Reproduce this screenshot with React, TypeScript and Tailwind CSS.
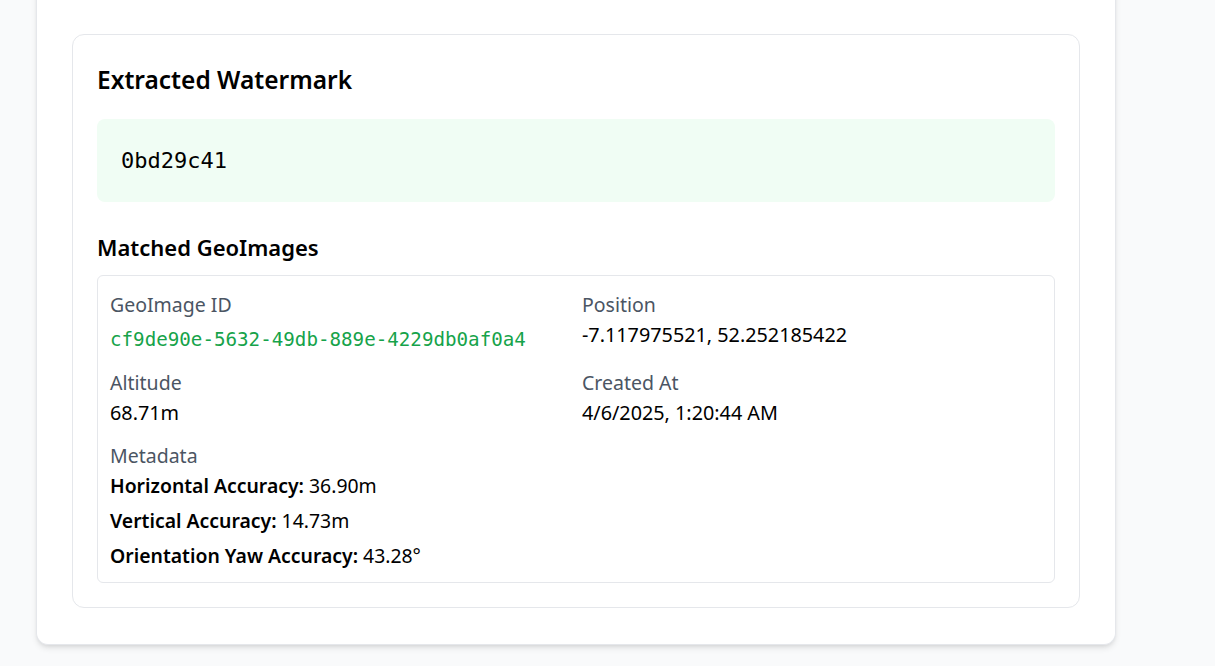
import React from 'react';

const sans = "font-['Segoe_UI','Noto_Sans',sans-serif]";
const mono = "font-['DejaVu_Sans_Mono','Liberation_Mono',monospace]";

const match = {
  id: 'cf9de90e-5632-49db-889e-4229db0af0a4',
  position: '-7.117975521, 52.252185422',
  altitude: '68.71m',
  createdAt: '4/6/2025, 1:20:44 AM',
  metadata: [
    ['Horizontal Accuracy', '36.90m'],
    ['Vertical Accuracy', '14.73m'],
    ['Orientation Yaw Accuracy', '43.28°'],
  ],
};

function Field({ label, children }: { label: string; children: React.ReactNode }) {
  return (
    <div>
      <div className="text-[19.5px] leading-[30px] text-[#4b5563]">{label}</div>
      {children}
    </div>
  );
}

export default function App() {
  return (
    <div className={`min-h-[666px] bg-[#f9fafb] overflow-hidden ${sans}`}>
      {/* outer panel, top edge scrolled out of view */}
      <div className="ml-[36px] w-[1080px] -mt-[20px] pt-[54px] pb-[36px] px-[35px] bg-white rounded-xl shadow-md border border-[#e5e7eb] border-t-0">
        <div className="border border-[#e5e7eb] rounded-xl p-6">
          <h2 className="text-[24.5px] leading-[42px] font-semibold text-black mb-[18px]">
            Extracted Watermark
          </h2>

          <div className="bg-[#f0fdf4] rounded-lg h-[83px] flex items-center px-6">
            <span className={`${mono} text-[22px] text-black`}>0bd29c41</span>
          </div>

          <h3 className="mt-[29px] mb-[12px] text-[22px] leading-[32px] font-semibold text-black">
            Matched GeoImages
          </h3>

          <div className="border border-[#e5e7eb] rounded-md px-3 pt-[14px] pb-[11px]">
            <div className="grid grid-cols-2 gap-x-3 gap-y-[13px]">
              <Field label="GeoImage ID">
                <div className={`${mono} mt-[5px] text-[19.2px] leading-[30px] text-[#16a34a]`}>
                  {match.id}
                </div>
              </Field>
              <Field label="Position">
                <div className="text-[19.8px] leading-[30px] text-black">{match.position}</div>
              </Field>
              <Field label="Altitude">
                <div className="text-[19.8px] leading-[30px] text-black">{match.altitude}</div>
              </Field>
              <Field label="Created At">
                <div className="text-[19.8px] leading-[30px] text-black">{match.createdAt}</div>
              </Field>
              <div className="col-span-2">
                <div className="text-[19.5px] leading-[30px] text-[#4b5563]">Metadata</div>
                <div className="space-y-[5px]">
                  {match.metadata.map(([k, v]) => (
                    <div key={k} className="text-[19.4px] leading-[30px] text-black">
                      <span className="font-semibold">{k}:</span> {v}
                    </div>
                  ))}
                </div>
              </div>
            </div>
          </div>
        </div>
      </div>
    </div>
  );
}
